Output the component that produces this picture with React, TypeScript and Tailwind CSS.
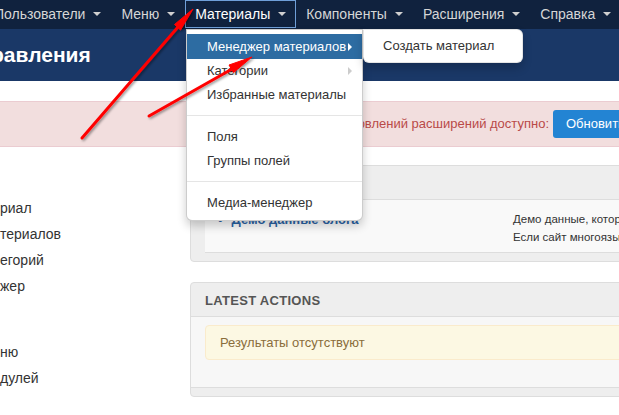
import React from 'react';

const navItems = [
  { label: 'Пользователи', active: false },
  { label: 'Меню', active: false },
  { label: 'Материалы', active: true },
  { label: 'Компоненты', active: false },
  { label: 'Расширения', active: false },
  { label: 'Справка', active: false },
];

const sidebarTop = ['риал', 'териалов', 'егорий', 'жер'];
const sidebarBottom = ['ню', 'дулей'];

function Caret() {
  return <span className="inline-block h-0 w-0 border-x-4 border-t-4 border-x-transparent border-t-[#d0d0d0]" />;
}

function MenuItem({ label, active, sub }: { label: string; active?: boolean; sub?: boolean }) {
  return (
    <div
      className={`flex h-[24px] items-center justify-between pl-[20px] pr-[10px] text-[13px] ${
        active ? 'h-[25px] bg-[#2d6ca2] text-white' : 'text-[#333]'
      }`}
    >
      <span>{label}</span>
      {sub && (
        <span
          className={`inline-block h-0 w-0 border-y-4 border-l-4 border-y-transparent ${
            active ? 'border-l-white' : 'border-l-[#ccc]'
          }`}
        />
      )}
    </div>
  );
}

function Divider() {
  return <div className="mb-[9px] mt-[8px] h-px bg-[#e5e5e5]" />;
}

export default function App() {
  return (
    <div className="relative h-[415px] w-[619px] overflow-hidden bg-white font-['Liberation_Sans',Arial,sans-serif]">
      {/* top navbar */}
      <nav className="flex h-[29px] bg-[#10223e] text-[14px]">
        <div className="ml-[-16px] flex">
          {navItems.map((item) => (
            <div
              key={item.label}
              className={`flex h-[28px] items-center gap-[8px] ${
                item.active ? 'border border-[#6f9fd8] px-[9px] text-white' : 'px-[10px] text-[#d6d6d6]'
              }`}
            >
              <span className="whitespace-nowrap">{item.label}</span>
              <Caret />
            </div>
          ))}
        </div>
      </nav>

      {/* header */}
      <header className="flex h-[52px] items-center bg-[#1a3867]">
        <h1 className="ml-[-9px] text-[21px] font-bold text-white">равления</h1>
      </header>

      {/* update alert */}
      <div className="mt-[20px] flex h-[46px] items-center justify-end border-y border-[#ebccd1] bg-[#f2dede]">
        <span className="mr-[4px] whitespace-nowrap text-[13px] text-[#b94a48]">Обновлений расширений доступно:</span>
        <div className="mr-[-40px] flex h-[28px] w-[106px] shrink-0 items-center rounded-[3px] bg-[#2384d3] pl-[13px] text-[13px] text-white">
          Обновить
        </div>
      </div>

      {/* body */}
      <div className="flex">
        <aside className="w-[190px] shrink-0 pt-[48px] text-[14px] text-[#333]">
          {sidebarTop.map((t) => (
            <div key={t} className="h-[26px] leading-[26px]">{t}</div>
          ))}
          <div className="mt-[40px]">
            {sidebarBottom.map((t) => (
              <div key={t} className="h-[26px] leading-[26px]">{t}</div>
            ))}
          </div>
        </aside>

        <main className="w-[470px] shrink-0 pt-[18px]">
          {/* sample data panel */}
          <div className="rounded-[4px] border border-[#ddd] bg-[#eee]">
            <div className="h-[34px] border-b border-[#ddd]" />
            <div className="pb-[8px] pl-[14px]">
              <div className="flex h-[53px] border-b border-[#ddd] bg-[#f9f9f9] pt-[10px]">
                <div className="flex w-[308px] shrink-0 gap-[9px] pl-[13px] text-[13px] font-bold text-[#2a62a4]">
                  <span>•</span>
                  <span>Демо данные блога</span>
                </div>
                <div className="whitespace-nowrap text-[11.5px] leading-[18px] text-[#333]">
                  <div>Демо данные, которые будут установлены</div>
                  <div>Если сайт многоязычный, данные</div>
                </div>
              </div>
            </div>
          </div>

          {/* latest actions */}
          <div className="mt-[20px] rounded-[4px] border border-[#ddd] bg-[#eee]">
            <div className="flex h-[34px] items-center border-b border-[#ddd] pl-[14px] pt-[2px] text-[13px] font-bold tracking-[0.3px] text-[#555]">
              LATEST ACTIONS
            </div>
            <div className="bg-[#f7f7f7] pb-[27px] pl-[14px] pt-[8px]">
              <div className="flex h-[35px] items-center rounded-l-[4px] border border-[#faebcc] bg-[#fcf8e3] pl-[14px] text-[13px] text-[#8a6d3b]">
                Результаты отсутствуют
              </div>
            </div>
            <div className="h-[9px] border-t border-[#ddd]" />
          </div>
        </main>
      </div>

      {/* dropdown */}
      <div className="absolute left-[186px] top-[29px] w-[177px] rounded-b-[6px] border border-black/20 bg-white pb-[5px] pt-[4px] shadow-[0_5px_10px_rgba(0,0,0,0.2)]">
        <MenuItem label="Менеджер материалов" active sub />
        <MenuItem label="Категории" sub />
        <MenuItem label="Избранные материалы" />
        <Divider />
        <MenuItem label="Поля" />
        <MenuItem label="Группы полей" />
        <Divider />
        <MenuItem label="Медиа-менеджер" />
      </div>

      {/* submenu */}
      <div className="absolute left-[363px] top-[29px] flex h-[34px] w-[160px] items-center rounded-[6px] rounded-tl-none border border-black/10 bg-white pl-[19px] text-[13px] text-[#333] shadow-[0_5px_10px_rgba(0,0,0,0.2)]">
        Создать материал
      </div>

      {/* red arrows */}
      <svg className="pointer-events-none absolute left-0 top-0" width="619" height="415">
        <defs>
          <filter id="sh" x="-20%" y="-20%" width="140%" height="140%">
            <feDropShadow dx="1.5" dy="1.5" stdDeviation="1" floodColor="#000" floodOpacity="0.4" />
          </filter>
        </defs>
        <g filter="url(#sh)" fill="#ff0000" stroke="#ff0000">
          <line x1="82" y1="138" x2="178" y2="27" strokeWidth="3" strokeLinecap="round" />
          <polygon points="193,9 180.5,30 174.5,24.5" strokeWidth="1" />
          <line x1="149" y1="116" x2="232" y2="69" strokeWidth="3" strokeLinecap="round" />
          <polygon points="252,57 233.5,72.5 229,65" strokeWidth="1" />
        </g>
      </svg>
    </div>
  );
}
